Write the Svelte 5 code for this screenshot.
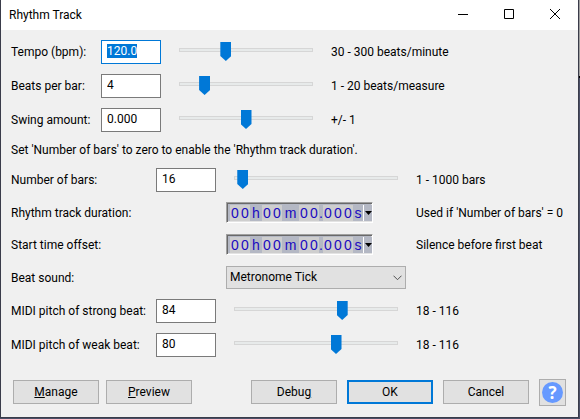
<script>
  const rhythm = $state([
    { id: 'tempo', label: 'Tempo (bpm):', text: '120.0', value: 120, min: 30, max: 300, step: 0.1, hint: '30 - 300 beats/minute' },
    { id: 'beats', label: 'Beats per bar:', text: '4', value: 4, min: 1, max: 20, step: 1, hint: '1 - 20 beats/measure' },
    { id: 'swing', label: 'Swing amount:', text: '0.000', value: 0, min: -1, max: 1, step: 0.001, hint: '+/- 1' },
  ]);
  const bars = $state([
    { id: 'bars', label: 'Number of bars:', text: '16', value: 16, min: 1, max: 1000, step: 1, hint: '1 - 1000 bars' },
  ]);
  const pitches = $state([
    { id: 'strong', label: 'MIDI pitch of strong beat:', text: '84', value: 84, min: 18, max: 116, step: 1, hint: '18 - 116' },
    { id: 'weak', label: 'MIDI pitch of weak beat:', text: '80', value: 80, min: 18, max: 116, step: 1, hint: '18 - 116' },
  ]);
  const times = [
    { id: 'duration', label: 'Rhythm track duration:', hint: "Used if 'Number of bars' = 0" },
    { id: 'offset', label: 'Start time offset:', hint: 'Silence before first beat' },
  ];
  const timeParts = [
    { digits: 2, unit: 'h', size: 'hours' },
    { digits: 2, unit: 'm', size: 'minutes' },
    { digits: 2, unit: '.', size: 'dot' },
    { digits: 3, unit: 's', size: 'seconds' },
  ];

  function focusFirst(node, active) {
    if (active) {
      node.focus();
      node.select();
    }
  }
</script>

{#snippet valueRow(row, first)}
  <div class="row">
    <label for={row.id}>{row.label}</label>
    <input class="field" id={row.id} type="text" bind:value={row.text} use:focusFirst={first} />
    <input
      class="slider"
      type="range"
      aria-label={row.label}
      min={row.min}
      max={row.max}
      step={row.step}
      bind:value={row.value}
      oninput={() => (row.text = String(row.value))}
    />
    <span class="hint">{row.hint}</span>
  </div>
{/snippet}

<div class="desktop">
  <main class="dialog">
    <header>
      <h1>Rhythm Track</h1>
      <button class="caption" aria-label="Minimize">
        <svg width="10" height="10" viewBox="0 0 10 10"><path d="M0 5.5H10" /></svg>
      </button>
      <button class="caption" aria-label="Maximize">
        <svg width="10" height="10" viewBox="0 0 10 10"><path d="M.5 .5H9.5V9.5H.5Z" /></svg>
      </button>
      <button class="caption" aria-label="Close">
        <svg width="10" height="10" viewBox="0 0 10 10"><path d="M0 0L10 10M10 0L0 10" /></svg>
      </button>
    </header>

    <form onsubmit={(e) => e.preventDefault()}>
      <section class="narrow">
        {#each rhythm as row, i}
          {@render valueRow(row, i === 0)}
        {/each}
      </section>

      <p>Set 'Number of bars' to zero to enable the 'Rhythm track duration'.</p>

      <section class="broad">
        {#each bars as row}
          {@render valueRow(row, false)}
        {/each}

        {#each times as time}
          <div class="row time-row">
            <label class="span" for="{time.id}-0-0">{time.label}</label>
            <div class="time" role="group" aria-label={time.label}>
              {#each timeParts as part, p}
                <span class="digits">
                  {#each Array(part.digits) as _, d}
                    <input id="{time.id}-{p}-{d}" type="text" maxlength="1" value="0" aria-label="Digit" />
                  {/each}
                </span>
                <span class="unit {part.size}">{part.unit}</span>
              {/each}
              <button class="format" type="button" aria-label="Time format">
                <svg width="7" height="4" viewBox="0 0 7 4"><path d="M0 0H7L3.5 4Z" /></svg>
              </button>
            </div>
            <span class="hint">{time.hint}</span>
          </div>
        {/each}

        <div class="row select-row">
          <label class="span" for="sound">Beat sound:</label>
          <div class="select">
            <select id="sound">
              <option>Metronome Tick</option>
            </select>
            <svg width="9" height="6" viewBox="0 0 9 6"><path d="M.5 .7L4.5 4.7L8.5 .7" /></svg>
          </div>
        </div>

        {#each pitches as row}
          {@render valueRow(row, false)}
        {/each}
      </section>

      <footer>
        <button class="push" type="button"><span><u>M</u>anage</span></button>
        <button class="push" type="button"><span><u>P</u>review</span></button>
        <div class="right">
          <button class="push" type="button"><span>Debu<u>g</u></span></button>
          <button class="push default" type="submit">OK</button>
          <button class="push" type="button">Cancel</button>
          <button class="help" type="button" aria-label="Help"><span>?</span></button>
        </div>
      </footer>
    </form>
  </main>
</div>

<style>
  .desktop,
  .desktop :global(*) {
    box-sizing: border-box;
  }
  .desktop {
    min-height: 100vh;
    display: flex;
    background: linear-gradient(#a0a0a0 76px, #000 76px, #000 78px, #4a4f66 78px);
    padding: 0 1px 1px 0;
    font: 12px/16px "Segoe UI", Roboto, sans-serif;
    color: #000;
  }
  .dialog {
    flex: 1;
    min-width: 0;
    background: #f0f0f0;
    border: 1px solid #3a3c4a;
    border-top: 0;
  }
  button,
  input,
  select {
    font: inherit;
    color: inherit;
    margin: 0;
    padding: 0;
    border-radius: 0;
    outline: 0;
  }
  header {
    display: flex;
    height: 30px;
    align-items: center;
    background: #fff;
    padding-left: 8px;
  }
  h1 {
    font: inherit;
    margin: 0;
    flex: 1;
  }
  .caption {
    width: 46px;
    height: 28px;
    align-self: flex-start;
    border: 0;
    background: none;
    display: grid;
    place-items: center;
  }
  .caption svg {
    fill: none;
    stroke: #000;
  }
  form {
    padding: 10px 10px 11px;
  }
  section {
    display: flex;
    flex-direction: column;
    gap: 10px;
  }
  .row {
    display: grid;
    align-items: center;
    column-gap: 10px;
    height: 24px;
  }
  .narrow .row {
    grid-template-columns: 80px 60px 150px 1fr;
  }
  .broad .row {
    grid-template-columns: 135px 60px 180px 1fr;
  }
  .broad .time-row {
    height: 22px;
  }
  .broad .select-row {
    height: 23px;
  }
  .span {
    grid-column: span 2;
  }
  label,
  .hint,
  p {
    white-space: nowrap;
  }
  p {
    margin: 10px 0;
  }
  .field {
    width: 100%;
    height: 24px;
    border: 1px solid #7a7a7a;
    background: #fff;
    padding: 0 5px 2px;
  }
  .field:focus {
    border-color: #0078d7;
  }
  .field::selection {
    background: #0078d7;
    color: #fff;
  }
  .slider {
    appearance: none;
    margin: 0 8px;
    height: 20px;
    background: none;
    min-width: 0;
  }
  .slider::-webkit-slider-runnable-track {
    height: 4px;
    margin-bottom: 4px;
    border: 1px solid #d6d6d6;
    background: #e7eaea;
  }
  .slider::-webkit-slider-thumb {
    appearance: none;
    width: 11px;
    height: 19px;
    margin-top: -7px;
    background: #0078d7;
    clip-path: polygon(0 0, 100% 0, 100% 14px, 50% 100%, 0 14px);
  }
  .time {
    display: flex;
    align-self: start;
    justify-self: start;
    height: 21px;
    border: 1px solid;
    border-color: #a0a0a0 #fff #fff #a0a0a0;
    box-shadow: inset 1px 1px #696969, inset -1px -1px #e3e3e3;
    background: #b4b8c4;
    padding: 2px 0 1px 3px;
    font-family: "Liberation Sans", Arial, sans-serif;
    font-size: 14px;
    color: #1a0ac0;
  }
  .digits {
    display: flex;
    background: #cecece;
  }
  .digits input {
    width: 10px;
    height: 16px;
    border: 0;
    background: none;
    text-align: center;
  }
  .unit {
    text-align: center;
    line-height: 16px;
  }
  .hours {
    width: 12px;
  }
  .minutes {
    width: 17px;
  }
  .dot {
    width: 4px;
  }
  .seconds {
    width: 10px;
  }
  .format {
    width: 9px;
    border: 0;
    border-left: 1px solid #fff;
    background: #b4b8c4;
    display: grid;
    place-items: center;
  }
  .select {
    display: flex;
    position: relative;
  }
  select {
    appearance: none;
    width: 100%;
    height: 23px;
    border: 1px solid #adadad;
    background: #e1e1e1;
    padding: 0 3px 1px;
  }
  .select svg {
    position: absolute;
    right: 4px;
    top: 9px;
    fill: none;
    stroke: #505050;
    pointer-events: none;
  }
  footer {
    display: flex;
    align-items: flex-start;
    gap: 7px;
    margin-top: 22px;
    padding: 0 2px;
  }
  .right {
    display: flex;
    align-items: flex-start;
    gap: 10px;
    margin-left: auto;
  }
  .push {
    width: 86px;
    height: 24px;
    margin-top: 1px;
    border: 1px solid #adadad;
    background: #e1e1e1;
  }
  .default {
    border: 2px solid #0078d7;
  }
  .help {
    width: 27px;
    height: 27px;
    border: 1px solid #adadad;
    background: #e1e1e1;
    display: grid;
    place-items: center;
  }
  .help span {
    width: 21px;
    height: 21px;
    border-radius: 50%;
    background: #6699ff;
    color: #fff;
    font: bold 17px/21px "Open Sans", sans-serif;
  }
</style>
